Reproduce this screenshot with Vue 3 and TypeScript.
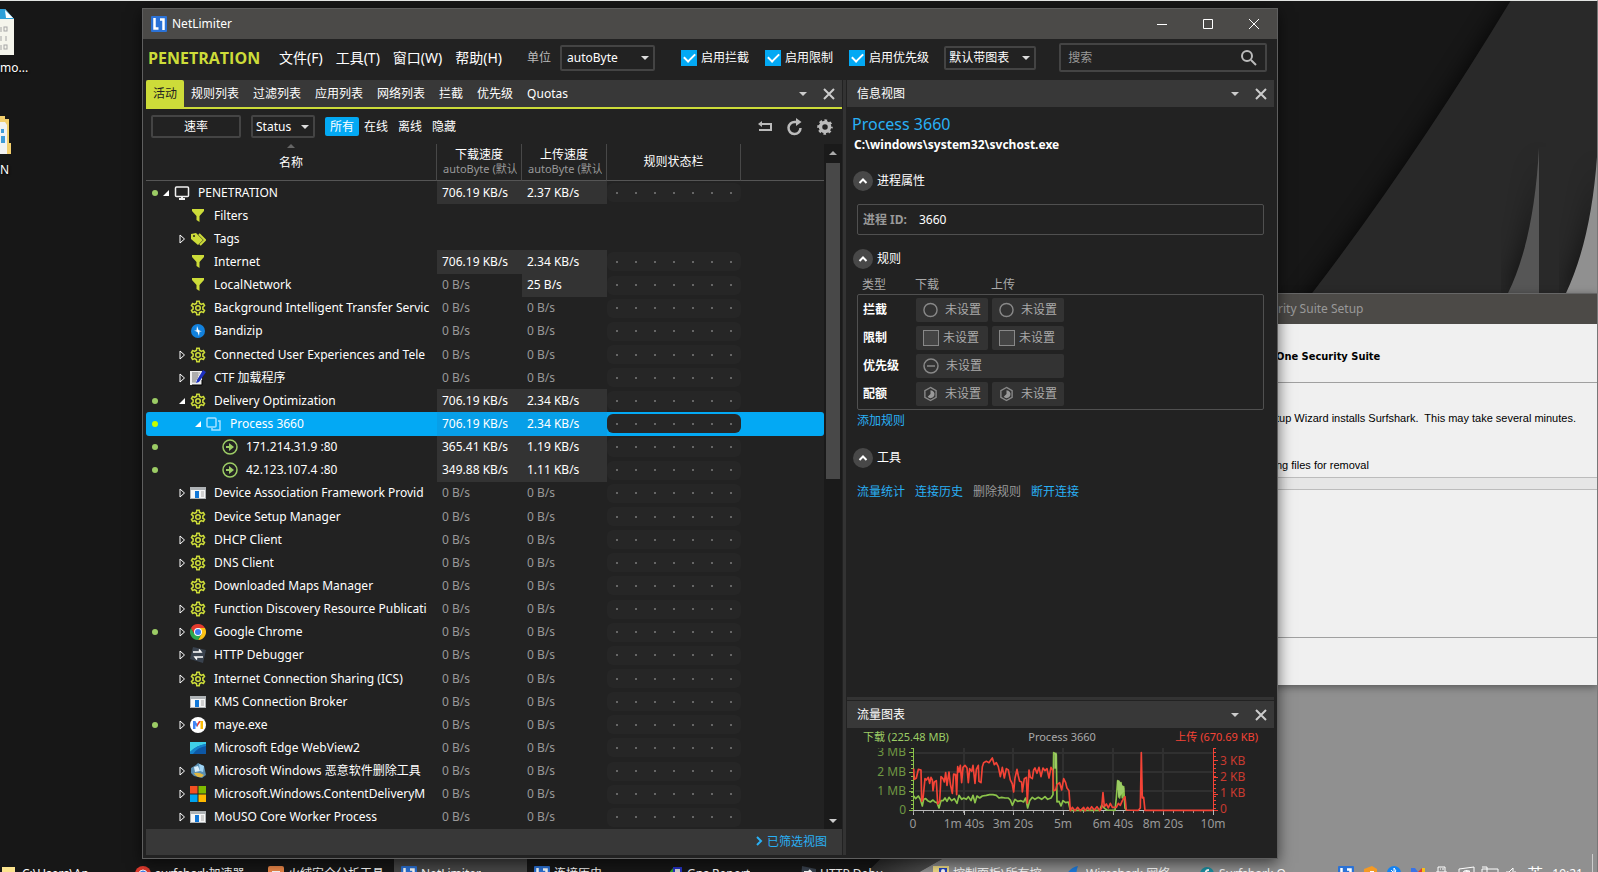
<script setup lang="ts">
import { ref } from 'vue'

interface TreeRow {
  name: string
  icon: string
  level: number
  toggle?: 'open' | 'closed'
  live?: boolean
  down?: string
  up?: string
  selected?: boolean
}

const idle = '0 B/s'

const rows: TreeRow[] = [
  { name: 'PENETRATION', icon: 'monitor', level: 0, toggle: 'open', live: true, down: '706.19 KB/s', up: '2.37 KB/s' },
  { name: 'Filters', icon: 'funnel', level: 1 },
  { name: 'Tags', icon: 'tags', level: 1, toggle: 'closed' },
  { name: 'Internet', icon: 'funnel', level: 1, down: '706.19 KB/s', up: '2.34 KB/s' },
  { name: 'LocalNetwork', icon: 'funnel', level: 1, down: idle, up: '25 B/s' },
  { name: 'Background Intelligent Transfer Servic', icon: 'gear', level: 1, down: idle, up: idle },
  { name: 'Bandizip', icon: 'bandizip', level: 1, down: idle, up: idle },
  { name: 'Connected User Experiences and Tele', icon: 'gear', level: 1, toggle: 'closed', down: idle, up: idle },
  { name: 'CTF 加载程序', icon: 'ctf', level: 1, toggle: 'closed', down: idle, up: idle },
  { name: 'Delivery Optimization', icon: 'gear', level: 1, toggle: 'open', live: true, down: '706.19 KB/s', up: '2.34 KB/s' },
  { name: 'Process 3660', icon: 'process', level: 2, toggle: 'open', live: true, down: '706.19 KB/s', up: '2.34 KB/s', selected: true },
  { name: '171.214.31.9 :80', icon: 'link', level: 3, live: true, down: '365.41 KB/s', up: '1.19 KB/s' },
  { name: '42.123.107.4 :80', icon: 'link', level: 3, live: true, down: '349.88 KB/s', up: '1.11 KB/s' },
  { name: 'Device Association Framework Provid', icon: 'app', level: 1, toggle: 'closed', down: idle, up: idle },
  { name: 'Device Setup Manager', icon: 'gear', level: 1, down: idle, up: idle },
  { name: 'DHCP Client', icon: 'gear', level: 1, toggle: 'closed', down: idle, up: idle },
  { name: 'DNS Client', icon: 'gear', level: 1, toggle: 'closed', down: idle, up: idle },
  { name: 'Downloaded Maps Manager', icon: 'gear', level: 1, down: idle, up: idle },
  { name: 'Function Discovery Resource Publicati', icon: 'gear', level: 1, toggle: 'closed', down: idle, up: idle },
  { name: 'Google Chrome', icon: 'chrome', level: 1, toggle: 'closed', live: true, down: idle, up: idle },
  { name: 'HTTP Debugger', icon: 'http', level: 1, toggle: 'closed', down: idle, up: idle },
  { name: 'Internet Connection Sharing (ICS)', icon: 'gear', level: 1, toggle: 'closed', down: idle, up: idle },
  { name: 'KMS Connection Broker', icon: 'app', level: 1, down: idle, up: idle },
  { name: 'maye.exe', icon: 'maye', level: 1, toggle: 'closed', live: true, down: idle, up: idle },
  { name: 'Microsoft Edge WebView2', icon: 'edge', level: 1, down: idle, up: idle },
  { name: 'Microsoft Windows 恶意软件删除工具', icon: 'msrt', level: 1, toggle: 'closed', down: idle, up: idle },
  { name: 'Microsoft.Windows.ContentDeliveryM', icon: 'windows', level: 1, toggle: 'closed', down: idle, up: idle },
  { name: 'MoUSO Core Worker Process', icon: 'app', level: 1, toggle: 'closed', down: idle, up: idle },
]

const menus = ['文件(F)', '工具(T)', '窗口(W)', '帮助(H)']
const tabs = ['活动', '规则列表', '过滤列表', '应用列表', '网络列表', '拦截', '优先级', 'Quotas']
const scopes = ['所有', '在线', '离线', '隐藏']
const activeTab = ref('活动')
const activeScope = ref('所有')
const switches = ref([
  { label: '启用拦截', on: true },
  { label: '启用限制', on: true },
  { label: '启用优先级', on: true },
])

const rules = [
  { label: '拦截', mark: 'circle', count: 2 },
  { label: '限制', mark: 'square', count: 2 },
  { label: '优先级', mark: 'minus', count: 1 },
  { label: '配额', mark: 'quota', count: 2 },
]

const isBusy = (rate?: string) => rate !== undefined && rate !== idle

const gearPath =
  'M12,8A4,4 0 0,1 16,12A4,4 0 0,1 12,16A4,4 0 0,1 8,12A4,4 0 0,1 12,8M12,10A2,2 0 0,0 10,12A2,2 0 0,0 12,14A2,2 0 0,0 14,12A2,2 0 0,0 12,10M10,22C9.75,22 9.54,21.82 9.5,21.58L9.13,18.93C8.5,18.68 7.96,18.34 7.44,17.94L4.95,18.95C4.73,19.03 4.46,18.95 4.34,18.73L2.34,15.27C2.21,15.05 2.27,14.78 2.46,14.63L4.57,12.97L4.5,12L4.57,11L2.46,9.37C2.27,9.22 2.21,8.95 2.34,8.73L4.34,5.27C4.46,5.05 4.73,4.96 4.95,5.05L7.44,6.05C7.96,5.66 8.5,5.32 9.13,5.07L9.5,2.42C9.54,2.18 9.75,2 10,2H14C14.25,2 14.46,2.18 14.5,2.42L14.87,5.07C15.5,5.32 16.04,5.66 16.56,6.05L19.05,5.05C19.27,4.96 19.54,5.05 19.66,5.27L21.66,8.73C21.79,8.95 21.73,9.22 21.54,9.37L19.43,11L19.5,12L19.43,13L21.54,14.63C21.73,14.78 21.79,15.05 21.66,15.27L19.66,18.73C19.54,18.95 19.27,19.04 19.05,18.95L16.56,17.95C16.04,18.34 15.5,18.68 14.87,18.93L14.5,21.58C14.46,21.82 14.25,22 14,22H10M11.25,4L10.88,6.61C9.68,6.86 8.62,7.5 7.85,8.39L5.44,7.35L4.69,8.65L6.8,10.2C6.4,11.37 6.4,12.64 6.8,13.8L4.68,15.36L5.43,16.66L7.86,15.62C8.63,16.5 9.68,17.14 10.87,17.38L11.24,20H12.76L13.13,17.39C14.32,17.14 15.37,16.5 16.14,15.62L18.57,16.66L19.32,15.36L17.2,13.81C17.6,12.64 17.6,11.37 17.2,10.2L19.31,8.65L18.56,7.35L16.15,8.39C15.38,7.5 14.32,6.86 13.12,6.62L12.75,4H11.25Z'

/* Chart series, in thirds of a pixel from the plot's top left corner. */
const uploadLine =
  '2,62 4,94 10,90 16,64 24,66 26,160 30,152 36,92 40,96 46,88 50,106 54,88 58,96 60,128 64,102 70,98 74,168 80,160 84,86 90,92 94,102 98,74 102,112 108,72 112,108 118,136 122,78 128,80 131,140 134,56 138,72 142,52 146,104 150,58 156,52 162,60 166,104 170,62 176,70 180,52 186,106 190,64 196,52 198,100 204,104 208,56 212,44 220,40 228,44 232,38 238,30 244,50 250,44 256,56 262,86 268,58 274,90 280,62 286,66 292,96 298,108 302,132 306,90 312,64 316,84 320,100 326,102 328,132 334,92 340,88 343,166 348,66 352,88 358,92 362,66 366,60 372,76 378,58 384,86 390,60 396,68 402,62 408,90 414,58 419,66 422,128 428,126 432,110 440,104 446,126 452,92 458,104 462,120 468,128 472,188 478,178 486,188 494,178 502,188 512,178 516,188 524,178 530,186 536,176 544,186 552,176 560,188 566,180 570,134 574,176 580,168 586,180 592,166 598,178 610,178 616,166 622,172 628,158 636,146 640,186 676,187 682,180 685,14 688,150 692,148 696,187 900,187'
const downloadLine =
  '2,144 8,152 16,144 22,154 28,174 32,154 38,152 44,158 52,162 60,156 66,162 72,164 78,180 84,158 90,158 96,150 102,160 108,148 116,158 124,152 132,166 138,142 146,154 152,150 160,154 166,146 174,158 180,142 186,164 192,144 200,150 208,144 220,142 230,140 240,140 250,142 258,150 266,148 276,150 286,150 292,156 298,172 306,154 314,160 324,158 332,162 338,150 344,180 350,158 358,148 366,154 376,148 386,154 396,146 404,154 414,150 420,140 422,14 430,20 432,162 438,160 444,174 450,158 458,164 466,162 472,187 560,187 566,172 576,182 582,186 606,187 610,150 614,98 620,150 624,104 628,150 632,116 636,180 640,187'

const tasks = [
  { label: 'C:\\Users\\Ap...', icon: 'folder' },
  { label: 'surfshark加速器', icon: 'chrome' },
  { label: '火绒安全分析工具', icon: 'fire' },
  { label: 'NetLimiter', icon: 'nl', active: true },
  { label: '连接历史', icon: 'nl' },
  { label: 'Gns Report', icon: 'report' },
  { label: 'HTTP Debu...', icon: 'http' },
  { label: '控制面板\\所有控...', icon: 'panel' },
  { label: 'Wireshark·网络...', icon: 'shark' },
  { label: 'Surfshark O...', icon: 'surf' },
]
</script>

<template>
  <div class="desktop">
    <svg class="wallpaper" viewBox="0 0 1598 872" preserveAspectRatio="none" aria-hidden="true">
      <defs>
        <filter id="soft" x="-20%" y="-20%" width="140%" height="140%"><feGaussianBlur stdDeviation="12" /></filter>
        <linearGradient id="fold" x1="0" x2="1"><stop offset="0" stop-color="#2a2a2a" /><stop offset="1" stop-color="#575757" /></linearGradient>
      </defs>
      <rect width="1598" height="872" fill="#171717" />
      <path d="M1512 0Q1420 150 1313 293L880 872H1598V0Z" fill="#000" filter="url(#soft)" opacity=".8" />
      <path d="M1512 0Q1415 160 1313 293L1270 350V872H1598V0Z" fill="#292929" />
      <path d="M1540 147Q1535 240 1509 293H1540Z" fill="#000" filter="url(#soft)" opacity=".7" />
      <path d="M1540 147H1598V293H1540Z" fill="#292929" />
      <path d="M1540 147Q1535 240 1509 293H1540Z" fill="#565656" />
      <path d="M1598 157Q1592 240 1567 293H1598Z" fill="#000" filter="url(#soft)" opacity=".7" />
      <path d="M1598 157Q1592 240 1567 293H1598Z" fill="#909090" />
      <path d="M883 857L868 872H920L946 857Z" fill="url(#fold)" />
      <path d="M946 857L920 872H1598V640H1200Z" fill="#909090" />
    </svg>

    <div class="shortcut file">
      <svg width="14" height="48" viewBox="0 0 14 48" aria-hidden="true">
        <path d="M0 0H5L14 10V46H0Z" fill="#f5f5ec" />
        <path d="M0 0H5L14 10H0Z" fill="#2d9fd8" /><path d="M5 1L13 9H6Z" fill="#fff" />
        <g fill="none" stroke="#a5a5a5"><path d="M1 18V23M1 27V32M1 36V41" /><rect x="4" y="18" width="3" height="4" /><path d="M6 27V32" /><rect x="4" y="36" width="3" height="4" /></g>
      </svg>
      <span>mo...</span>
    </div>
    <div class="shortcut dir">
      <svg width="14" height="40" viewBox="0 0 14 40" aria-hidden="true">
        <path d="M0 0H5V3H9V27H11V38H0Z" fill="#f3cf6d" /><path d="M0 6H5L7 9V38H0Z" fill="#f2f2f2" /><path d="M1 13H4V17H1ZM1 20H5V27H1Z" fill="#3f9bd8" />
      </svg>
      <span>N</span>
    </div>

    <section class="installer">
      <header>rity Suite Setup</header>
      <h3>One Security Suite</h3>
      <p>tup Wizard installs Surfshark.&nbsp; This may take several minutes.</p>
      <p>ng files for removal</p>
      <div class="bar"></div>
      <footer></footer>
    </section>

    <nav class="taskbar">
      <button v-for="t in tasks" :key="t.label" class="task" :class="{ on: t.active }">
        <svg width="16" height="16" viewBox="0 0 16 16" aria-hidden="true">
          <g v-if="t.icon === 'nl'"><rect width="16" height="16" rx="1" fill="#2b72d6" /><path d="M3.500 2V12.500H7.500M9 3.500H12.500V14" fill="none" stroke="#fff" stroke-width="2.500" /></g>
          <g v-else-if="t.icon === 'chrome'"><circle cx="8" cy="8" r="8" fill="#e33b2e" /><circle cx="8" cy="8" r="4" fill="#4285f4" stroke="#fff" /></g>
          <g v-else-if="t.icon === 'fire'"><rect width="16" height="16" rx="2" fill="#f08a4b" /><path d="M4 5H12V12H4Z" fill="#fff" /></g>
          <g v-else-if="t.icon === 'folder'"><path d="M0 1H13V16H0Z" fill="#fbe38e" /></g>
          <g v-else-if="t.icon === 'report'"><path d="M1 8L6 2L8 8Z" fill="#2ca02c" /><path d="M6 1H15V14H6Z" fill="#2733c7" /><path d="M8 3H13V8H8Z" fill="#ddd" /></g>
          <g v-else-if="t.icon === 'http'"><path d="M2 0L16 3V15L1 13Z" fill="#39424e" /><path d="M4 6H11L9 4M12 10H5L7 12" fill="none" stroke="#fff" stroke-width="2" /></g>
          <g v-else-if="t.icon === 'panel'"><rect width="16" height="14" fill="#f4e08a" /><rect x="6" y="2" width="8" height="9" fill="#2447c4" /><circle cx="10" cy="5" r="2" fill="#fff" /></g>
          <path v-else-if="t.icon === 'shark'" d="M0 10Q4 1 12 0Q9 7 12 14H0Z" fill="#1d7de0" />
          <g v-else><circle cx="8" cy="8" r="7" fill="#1b8fa1" /><path d="M10 4Q6 4 7 8Q9 12 5 12" fill="none" stroke="#fff" stroke-width="2" /></g>
        </svg>
        <span>{{ t.label }}</span>
      </button>
      <div class="tray">
        <svg width="180" height="16" viewBox="0 0 180 16" aria-hidden="true">
          <rect width="16" height="16" rx="1" fill="#2b72d6" /><path d="M3.500 2V12.500H7.500M9 3.500H12.500V14" fill="none" stroke="#fff" stroke-width="2.500" />
          <path d="M26 3L34 0L39 3V14H26Z" fill="#f59a23" /><path d="M32 5H36V12H32Z" fill="#fff" />
          <circle cx="56" cy="7" r="7" fill="#1583f2" /><path d="M53 4L58 9L56 11V2L58 5L53 9" fill="none" stroke="#fff" />
          <path d="M73 2H77L80 6V12H73Z" fill="#3973e6" /><path d="M80 6L84 2V12H80Z" fill="#e33b2e" /><path d="M84 2H87V12H84Z" fill="#f5c21b" />
          <g fill="none" stroke="#fff"><path d="M100 6V1H107V6M98 6H109V15H98ZM102 3H103M104 3H106" /><path d="M121 3L136 1V14H121ZM126 6L132 5M124 10A4 4 0 0 1 133 8" /><path d="M144 3H160V12H144ZM144 1H149V6" /><path d="M168 6H171L175 2V14L171 10H168M177 5V11" /></g>
        </svg>
        <span class="ime">英</span>
        <time>19:21</time>
      </div>
    </nav>

    <main class="window">
      <header class="titlebar">
        <svg width="16" height="16" viewBox="0 0 16 16" aria-hidden="true"><rect width="16" height="16" rx="1" fill="#2b72d6" /><path d="M3.500 2V12.500H7.500M9 3.500H12.500V14" fill="none" stroke="#fff" stroke-width="2.500" /></svg>
        <span class="caption">NetLimiter</span>
        <button aria-label="Minimize"><svg width="12" height="12" viewBox="0 0 12 12"><path d="M1 6.500H11" /></svg></button>
        <button aria-label="Maximize"><svg width="12" height="12" viewBox="0 0 12 12"><path d="M1.500 1.500H10.500V10.500H1.500Z" /></svg></button>
        <button aria-label="Close"><svg width="12" height="12" viewBox="0 0 12 12"><path d="M1 1L11 11M11 1L1 11" /></svg></button>
      </header>

      <div class="menubar">
        <strong class="host">PENETRATION</strong>
        <button v-for="m in menus" :key="m" class="menu">{{ m }}</button>
        <label class="unit" for="unit">单位</label>
        <span class="select wide"><select id="unit"><option>autoByte</option></select></span>
        <label v-for="s in switches" :key="s.label" class="switch"><input v-model="s.on" type="checkbox" />{{ s.label }}</label>
        <span class="select chart-mode"><select aria-label="图表模式"><option>默认带图表</option></select></span>
        <div class="search">
          <input type="text" placeholder="搜索" aria-label="搜索" />
          <svg width="18" height="18" viewBox="0 0 18 18" aria-hidden="true"><circle cx="7" cy="7" r="5" /><path d="M11 11L16 16" /></svg>
        </div>
      </div>

      <div class="body">
        <section class="left">
          <div class="tabs">
            <button v-for="t in tabs" :key="t" :class="{ on: activeTab === t }" @click="activeTab = t">{{ t }}</button>
            <span class="grow"></span>
            <button class="glyph" aria-label="展开"><i class="caret"></i></button>
            <button class="glyph" aria-label="关闭"><svg width="12" height="12" viewBox="0 0 12 12"><path d="M1 1L11 11M11 1L1 11" /></svg></button>
          </div>
          <div class="tools">
            <button class="rate">速率</button>
            <span class="select status"><select aria-label="Status"><option>Status</option></select></span>
            <div class="scopes"><button v-for="s in scopes" :key="s" :class="{ on: activeScope === s }" @click="activeScope = s">{{ s }}</button></div>
            <span class="grow"></span>
            <button class="tool" aria-label="返回"><svg width="18" height="18" viewBox="0 0 18 18"><path d="M4 6H15V12H3" fill="none" stroke="#bbb" stroke-width="2" /><path d="M2 6L6 3V9Z" fill="#bbb" /></svg></button>
            <button class="tool" aria-label="刷新"><svg width="18" height="18" viewBox="0 0 18 18"><path d="M14.500 10A6 6 0 1 1 9 4H11" fill="none" stroke="#bbb" stroke-width="2.500" /><path d="M10 0L15.500 4L10 8Z" fill="#bbb" /></svg></button>
            <button class="tool" aria-label="设置"><svg width="18" height="18" viewBox="0 0 18 18"><g fill="none" stroke="#bbb"><circle cx="9" cy="9" r="4.500" stroke-width="3.500" /><circle cx="9" cy="9" r="6.500" stroke-width="2.500" stroke-dasharray="2.600 2.505" stroke-dashoffset="1.300" /></g></svg></button>
          </div>

          <div class="tree">
            <table>
              <colgroup><col class="c-name" /><col class="c-rate" /><col class="c-rate" /><col class="c-rule" /><col /></colgroup>
              <thead>
                <tr>
                  <th><i class="sort"></i>名称</th>
                  <th><b>下载速度</b><small>autoByte (默认)</small></th>
                  <th><b>上传速度</b><small>autoByte (默认)</small></th>
                  <th>规则状态栏</th>
                  <th></th>
                </tr>
              </thead>
              <tbody>
                <tr v-for="r in rows" :key="r.name" :class="{ selected: r.selected }">
                  <td class="name">
                    <div :class="['cell', 'level' + r.level]">
                      <i class="live" :class="{ on: r.live }"></i>
                      <span class="toggle">
                        <svg v-if="r.toggle === 'open'" width="8" height="8" viewBox="0 0 8 8"><path d="M7 1V7H1Z" fill="#fff" /></svg>
                        <svg v-else-if="r.toggle === 'closed'" width="8" height="10" viewBox="0 0 8 10"><path d="M2 1L6.500 5L2 9Z" fill="none" stroke="#fff" /></svg>
                      </span>
                      <svg class="icon" width="16" height="16" viewBox="0 0 16 16" aria-hidden="true">
                        <g v-if="r.icon === 'monitor'" fill="none" stroke="#f1f1f1"><rect x="1.500" y="2" width="13" height="9.500" rx="1" stroke-width="1.500" /><path d="M5 14H11M8 11V14" stroke-width="2" /></g>
                        <path v-else-if="r.icon === 'funnel'" d="M2 1H14V3L9.500 8V14L6.500 12V8L2 3Z" fill="#cddc39" />
                        <g v-else-if="r.icon === 'tags'"><path d="M9 3L15 9L10 14" fill="none" stroke="#cddc39" stroke-width="2" /><path d="M1 3L6 2L13 9L8 14L1 8Z" fill="#cddc39" /><circle cx="4" cy="5" r="1" fill="#222" /></g>
                        <svg v-else-if="r.icon === 'gear'" width="16" height="16" viewBox="1.500 1.500 21 21"><path :d="gearPath" fill="#cddc39" /></svg>
                        <g v-else-if="r.icon === 'bandizip'"><circle cx="8" cy="8" r="7" fill="#1281dd" /><path d="M7 3L8.500 7L12 8.500H9.500L9 13L7.500 9L4 7.500H6.500Z" fill="#fff" /></g>
                        <g v-else-if="r.icon === 'ctf'"><path d="M0 1H12V15H0Z" fill="#eee" /><path d="M2 3H10M2 5H9M2 7H8M2 9H7M2 11H6M3 2V13M5 2V13M7 2V10" stroke="#888" stroke-width=".8" /><path d="M13 0L7 10L6 13L9 12L16 2Z" fill="#1b2fc0" /><path d="M2 15H12V10" stroke="#000" fill="none" /></g>
                        <g v-else-if="r.icon === 'process'" fill="none" stroke="#a5e1ff" stroke-width="1.500"><rect x="1" y="2" width="9" height="9" rx="1" /><path d="M12 5H14V14H6V12" /></g>
                        <g v-else-if="r.icon === 'link'"><circle cx="8" cy="8" r="7" fill="none" stroke="#9ccc65" stroke-width="1.500" /><path d="M4 7H7V4L12 8L7 12V9H4Z" fill="#9ccc65" /></g>
                        <g v-else-if="r.icon === 'app'"><path d="M0 2H16V14H0Z" fill="#aeb2b5" /><path d="M1 5H15V13H1Z" fill="#f6f6f6" /><path d="M5 6H9V13H5Z" fill="#1177d7" /><path d="M11 7H14M11 9H14M11 11H14" stroke="#aaa" /></g>
                        <g v-else-if="r.icon === 'chrome'"><path d="M8 4H14.930A8 8 0 0 1 8 16L11.500 10Z" fill="#fbc116" /><path d="M1.070 4A8 8 0 0 0 8 16L11.500 10H4.500Z" fill="#2da94f" /><path d="M1.070 4A8 8 0 0 1 14.930 4H8L4.500 10Z" fill="#e33b2e" /><circle cx="8" cy="8" r="4" fill="#fff" /><circle cx="8" cy="8" r="3" fill="#3c7df0" /></g>
                        <g v-else-if="r.icon === 'http'"><path d="M3 0L16 3L13 16L0 12Z" fill="#39424e" /><path d="M3 5H11L9 2.500M13 10H5L7 12.500" fill="none" stroke="#fff" stroke-width="1.500" /></g>
                        <g v-else-if="r.icon === 'maye'"><circle cx="8" cy="8" r="8" fill="#fff" /><path d="M3 4H5.500V12H3Z" fill="#4285f4" /><path d="M5 4L8 8L7 10L5 8Z" fill="#4285f4" /><path d="M11 4L7 10V7L9 4Z" fill="#ea4335" /><path d="M10.500 4H13V12H10.500Z" fill="#fbbc05" /></g>
                        <g v-else-if="r.icon === 'edge'"><path d="M0 2H16V14H0Z" fill="#0d57a5" /><path d="M0 2H16V4Q7 5 0 12Z" fill="#3fd0e8" /><path d="M0 12Q7 5 16 4V6Q8 7 3 14H0Z" fill="#1583cb" /></g>
                        <g v-else-if="r.icon === 'msrt'"><path d="M1 5L6 2L8 0L14 3L16 12L12 15L4 13L1 10Z" fill="#5a8fb3" /><path d="M4 4L8 3L10 8L5 9Z" fill="#d9eefb" /><path d="M9 1L14 3L13 9L10 8Z" fill="#9fd4f5" /><path d="M4 10Q9 9 14 12L12 14Q6 15 4 10Z" fill="#e0b742" /></g>
                        <g v-else-if="r.icon === 'windows'"><path d="M0 0H7.500V7.500H0Z" fill="#f25022" /><path d="M8.500 0H16V7.500H8.500Z" fill="#7fba00" /><path d="M0 8.500H7.500V16H0Z" fill="#00a4ef" /><path d="M8.500 8.500H16V16H8.500Z" fill="#ffb900" /></g>
                      </svg>
                      <span class="label">{{ r.name }}</span>
                    </div>
                  </td>
                  <td class="rate-cell" :class="{ busy: isBusy(r.down) }">{{ r.down }}</td>
                  <td class="rate-cell" :class="{ busy: isBusy(r.up) }">{{ r.up }}</td>
                  <td class="rule-cell"><div v-if="r.down" class="pill"><i v-for="n in 7" :key="n"></i></div></td>
                  <td class="rest"></td>
                </tr>
              </tbody>
            </table>
            <div class="scroll"><i class="up"></i><span class="thumb"></span><i class="down"></i></div>
          </div>
          <footer class="filtered"><a href="#"><svg width="8" height="10" viewBox="0 0 8 10" aria-hidden="true"><path d="M2 1L6 5L2 9" /></svg>已筛选视图</a></footer>
        </section>

        <aside class="right">
          <section class="info">
            <header class="pane-head"><span>信息视图</span>
              <button class="glyph" aria-label="展开"><i class="caret"></i></button>
              <button class="glyph" aria-label="关闭"><svg width="12" height="12" viewBox="0 0 12 12"><path d="M1 1L11 11M11 1L1 11" /></svg></button>
            </header>
            <h1>Process 3660</h1>
            <p class="path">C:\windows\system32\svchost.exe</p>

            <h2 class="first"><button aria-label="折叠"><svg width="10" height="8" viewBox="0 0 10 8"><path d="M1.500 6L5 2.500L8.500 6" /></svg></button>进程属性</h2>
            <dl><dt>进程 ID:</dt><dd>3660</dd></dl>

            <h2 class="second"><button aria-label="折叠"><svg width="10" height="8" viewBox="0 0 10 8"><path d="M1.500 6L5 2.500L8.500 6" /></svg></button>规则</h2>
            <div class="rule-grid rule-titles"><span>类型</span><span>下载</span><span>上传</span></div>
            <div class="rules">
              <div v-for="r in rules" :key="r.label" class="rule-grid">
                <b>{{ r.label }}</b>
                <button v-for="n in r.count" :key="n" :class="[r.mark, { span: r.count === 1 }]">
                  <svg width="16" height="16" viewBox="0 0 16 16" aria-hidden="true">
                    <rect v-if="r.mark === 'square'" x=".5" y=".5" width="15" height="15" fill="#444" />
                    <g v-else-if="r.mark === 'quota'"><path d="M8 1L14 4.500V11.500L8 15L2 11.500V4.500Z" stroke-width="1.500" /><path d="M8 4V8L5 11A4.200 4.200 0 1 0 8 4Z" fill="#999" stroke="none" /></g>
                    <g v-else stroke-width="1.500"><circle cx="8" cy="8" r="7" /><path v-if="r.mark === 'minus'" d="M4 8H12" /></g>
                  </svg>未设置
                </button>
              </div>
            </div>
            <a class="add" href="#">添加规则</a>

            <h2 class="third"><button aria-label="折叠"><svg width="10" height="8" viewBox="0 0 10 8"><path d="M1.500 6L5 2.500L8.500 6" /></svg></button>工具</h2>
            <div class="links"><a href="#">流量统计</a><a href="#">连接历史</a><a class="off" href="#">删除规则</a><a href="#">断开连接</a></div>
          </section>

          <section class="traffic">
            <header class="pane-head"><span>流量图表</span>
              <button class="glyph" aria-label="展开"><i class="caret"></i></button>
              <button class="glyph" aria-label="关闭"><svg width="12" height="12" viewBox="0 0 12 12"><path d="M1 1L11 11M11 1L1 11" /></svg></button>
            </header>
            <div class="legend"><span class="dl">下载 (225.48 MB)</span><span>Process 3660</span><span class="ul">上传 (670.69 KB)</span></div>
            <svg class="plot" height="90" viewBox="0 0 427 90" role="img" aria-label="流量图表">
              <path d="M117 0V62M166 0V62M216 0V62M266 0V62M316 0V62M68 5H366M68 24H366M68 43H366" stroke="#303030" stroke-width="2" />
              <path d="M66.500 0V66M62 4.500H66M62 24.500H66M62 43.500H66M62 62.500H66" stroke="#8bc34a" />
              <path d="M65 0V62" stroke="#8bc34a" stroke-width="2" stroke-dasharray="1 3" />
              <path d="M366.500 0V62M366 12.500H371M366 29.500H371M366 46.500H371M366 62.500H371" stroke="#f44336" />
              <path d="M368 0V62" stroke="#f44336" stroke-width="2" stroke-dasharray="1 3" />
              <path d="M66 62.500H366M66.500 62V67M117.500 62V67M166.500 62V67M216.500 62V67M266.500 62V67M316.500 62V67M366.500 62V67" stroke="#bbb" />
              <path d="M66 64H366" stroke="#999" stroke-width="2" stroke-dasharray="1 9" />
              <g transform="translate(66 0) scale(.3333)" fill="none" stroke-width="5" stroke-linejoin="round">
                <polyline :points="downloadLine" stroke="#8bc34a" />
                <path d="M424 14H431V62H424Z" fill="#9ccc65" />
                <path d="M612 100L618 96L634 120V130L616 150Z" fill="#9ccc65" />
                <polyline :points="uploadLine" stroke="#f44336" />
              </g>
              <g class="dl-axis" text-anchor="end"><text x="59" y="8">3 MB</text><text x="59" y="28">2 MB</text><text x="59" y="47">1 MB</text><text x="59" y="66">0</text></g>
              <g class="ul-axis"><text x="373" y="17">3 KB</text><text x="373" y="33">2 KB</text><text x="373" y="49">1 KB</text><text x="373" y="65">0</text></g>
              <g class="time-axis" text-anchor="middle"><text x="66" y="80">0</text><text x="117" y="80">1m 40s</text><text x="166" y="80">3m 20s</text><text x="216" y="80">5m</text><text x="266" y="80">6m 40s</text><text x="316" y="80">8m 20s</text><text x="366" y="80">10m</text></g>
            </svg>
          </section>
        </aside>
      </div>
    </main>
  </div>
</template>

<style>
body { margin: 0; background: #171717; }
</style>

<style scoped>
* { box-sizing: border-box; }
.desktop { position: relative; height: 100vh; overflow: hidden; border-top: 1px solid #e2e4e2; border-right: 1px solid #777; color: #fff; font: 12px/16px "Noto Sans", "Noto Sans CJK SC", sans-serif; }
button, input, select { font: inherit; color: inherit; margin: 0; padding: 0; border: 0; background: none; }
button { display: flex; align-items: center; justify-content: center; white-space: nowrap; }
a { color: #29b0f5; text-decoration: none; }
h1, h2, h3, p, dl, dd { margin: 0; }
.grow { flex: 1; }
.wallpaper { position: absolute; top: -1px; left: 0; width: 100%; height: 100vh; }

.shortcut { position: absolute; left: 0; display: flex; flex-direction: column; gap: 3px; text-shadow: 1px 1px 2px #000; }
.shortcut svg { display: block; }
.file { top: 8px; }
.dir { top: 115px; gap: 6px; }

.installer { position: absolute; top: 292px; left: 1270px; right: 0; height: 392px; display: flex; flex-direction: column; background: #f0f0f0; color: #000; font-size: 11px; white-space: nowrap; overflow: hidden; box-shadow: 0 2px 8px #0006; border-top: 1px solid #666; }
.installer header { height: 30px; padding: 7px 8px; background: #4c4a47; color: #999; font-size: 12px; }
.installer h3 { height: 59px; padding: 25px 6px 0; font: 700 11px/16px "DejaVu Sans Condensed", "DejaVu Sans", sans-serif; border-bottom: 1px solid #a0a0a0; }
.installer p { padding: 27px 6px 0; height: 47px; font-family: "Liberation Sans", sans-serif; }
.installer .bar { height: 13px; border: solid #bcbcbc; border-width: 1px 0; background: #e6e6e6; }
.installer footer { margin-top: auto; height: 48px; border-top: 1px solid #a0a0a0; }

.taskbar { position: absolute; left: -5px; right: 0; bottom: -22px; height: 40px; display: flex; }
.task { width: 133px; flex: none; justify-content: flex-start; gap: 4px; padding: 0 7px; }
.task svg { flex: none; }
.task span { overflow: hidden; }
.task.on { background: #484848; }
.tray { margin-left: auto; display: flex; align-items: center; gap: 9px; padding-right: 9px; border-right: 1px solid #ccc; margin-right: 4px; }
.ime { font-size: 16px; }

.window { position: absolute; left: 142px; right: 319px; top: 7px; bottom: 13px; display: flex; flex-direction: column; background: #222; border: 1px solid #5f5f5f; box-shadow: 0 4px 14px #0009; }
.titlebar { height: 30px; flex: none; display: flex; align-items: center; padding-left: 8px; background: #4b4a48; }
.caption { flex: 1; padding-left: 5px; }
.titlebar button { width: 46px; height: 30px; }
.titlebar button svg { fill: none; stroke: #fff; }

.menubar { height: 41px; flex: none; display: flex; align-items: center; padding: 0 10px 4px 5px; }
.host { width: 124px; margin-right: 7px; color: #cddc39; font: 700 16px/24px "Open Sans", sans-serif; }
.menu { font-size: 14px; margin-right: 13px; }
.unit { color: #bbb; margin: 0 9px 0 12px; }
.select { position: relative; display: flex; flex: none; }
.select select { width: 100%; appearance: none; border: 2px solid #444; border-radius: 2px; background: #222; }
.select::after { content: ""; position: absolute; right: 6px; top: 50%; margin-top: -2px; border: 4px solid transparent; border-top-color: #ddd; border-bottom: 0; pointer-events: none; }
.wide { width: 95px; margin-right: 26px; }
.wide select { height: 26px; padding-left: 5px; }
.chart-mode { width: 92px; margin-left: -1px; }
.chart-mode select { height: 24px; padding-left: 3px; }
.switch { display: flex; align-items: center; gap: 4px; margin-right: 16px; white-space: nowrap; }
.switch input { appearance: none; width: 16px; height: 16px; background: #03a9f4; display: grid; place-items: center; }
.switch input:checked::after { content: ""; width: 5px; height: 9px; margin-top: -2px; border: solid #fff; border-width: 0 2px 2px 0; transform: rotate(45deg); }
.search { flex: 1; display: flex; align-items: center; min-width: 0; height: 29px; margin-left: 23px; padding: 0 7px; border: 2px solid #444; border-radius: 2px; }
.search input { flex: 1; min-width: 0; outline: 0; }
.search input::placeholder { color: #999; }
.search svg { fill: none; stroke: #bbb; stroke-width: 2; }

.body { flex: 1; min-height: 0; display: grid; grid-template-columns: minmax(0, 696fr) 5px minmax(0, 427fr); padding: 0 3px 3px; }
.left { display: flex; flex-direction: column; min-height: 0; }
.tabs { display: flex; height: 29px; flex: none; background: #383838; border-bottom: 2px solid #cddc39; }
.tabs button { padding: 0 7px; }
.tabs button.on { background: #cddc39; color: #222; border-radius: 2px 2px 0 0; }
.tabs .glyph, .glyph { width: 26px; height: 27px; padding: 0; }
.glyph svg { fill: none; stroke: #ccc; stroke-width: 2; }
.caret { border: 4px solid transparent; border-top-color: #ccc; border-bottom: 0; }
.tools { display: flex; align-items: center; height: 35px; flex: none; padding: 0 8px 0 5px; }
.rate { width: 90px; height: 23px; border: 2px solid #444; border-radius: 2px; }
.status { width: 64px; margin: 0 10px; }
.status select { height: 23px; padding-left: 3px; }
.scopes { display: flex; }
.scopes button { height: 19px; padding: 0 5px; border-radius: 2px; }
.scopes button.on { background: #03a9f4; }
.tool { width: 18px; margin-left: 12px; }

.tree { flex: 1; min-height: 0; display: grid; grid-template-columns: minmax(0, 1fr) 18px; }
table { width: 100%; height: 100%; table-layout: fixed; border-collapse: separate; border-spacing: 0; }
.c-name { width: 291px; }
.c-rate { width: 85px; }
.c-rule { width: 134px; }
th { height: 37px; padding: 0; font-weight: 400; border-right: 1px solid #484848; border-bottom: 1px solid #555; line-height: 14px; overflow: hidden; white-space: nowrap; }
th:last-child { border-right: 0; }
th b { display: block; font-weight: 400; }
th small { display: block; margin: 0 4px 0 6px; font-size: 11px; color: #999; overflow: hidden; text-align: left; }
.sort { display: block; width: 0; margin: -10px auto 8px; border: 4px solid transparent; border-bottom-color: #666; border-top: 0; }
td { padding: 0; line-height: 20px; vertical-align: middle; white-space: nowrap; }
.cell { display: flex; align-items: center; margin-right: 5px; overflow: hidden; }
.live { flex: none; width: 6px; height: 6px; margin: 0 2px 0 6px; border-radius: 50%; }
.live.on { background: #9ccc65; }
.toggle { flex: none; width: 12px; height: 16px; margin-right: 2px; display: flex; align-items: center; justify-content: center; }
.level1 .toggle { margin-left: 16px; }
.level2 .toggle { margin-left: 32px; }
.level3 .toggle { margin-left: 48px; }
.icon { flex: none; margin-right: 8px; }
.rate-cell { padding-left: 5px; color: #999; }
.rate-cell.busy { background: #333; color: #fff; }
.pill { display: flex; align-items: center; justify-content: space-between; height: 19px; padding: 0 9px; border-radius: 6px; background: #262626; }
.pill i { width: 2px; height: 2px; background: #666; }
.selected td { background: #03a9f4; color: #fff; }
.selected .name { border-radius: 3px 0 0 3px; }
.selected .rate-cell.busy { background: #079fe8; color: #fff; }
.selected .rest { border-radius: 0 3px 3px 0; }
.selected .live { background: #c6ff00; }
.scroll { display: flex; flex-direction: column; align-items: center; padding: 7px 0 6px; background: #1a1a1a; }
.scroll .up { border: 4px solid transparent; border-bottom-color: #aaa; border-top: 0; }
.scroll .down { margin-top: auto; border: 4px solid transparent; border-top-color: #ccc; border-bottom: 0; }
.thumb { width: 14px; height: 47%; margin-top: 8px; background: #484848; }
.filtered { height: 26px; flex: none; display: flex; align-items: center; justify-content: flex-end; padding-right: 15px; background: #383838; }
.filtered svg { margin-right: 4px; fill: none; stroke: #29b0f5; stroke-width: 2; }

.right { grid-column: 3; display: flex; flex-direction: column; min-height: 0; }
.body::before { content: ""; grid-column: 2; grid-row: 1; width: 3px; margin-left: 1px; background: #333; }
.left { grid-column: 1; grid-row: 1; }
.right { grid-row: 1; }
.pane-head { display: flex; align-items: center; height: 27px; padding-left: 10px; background: #383838; }
.pane-head span { flex: 1; }
.info { flex: 1; min-height: 0; }
h1 { margin: 7px 5px 0; color: #29b0f5; font-size: 16px; line-height: 20px; font-weight: 400; }
.path { margin: 2px 7px 0; font-weight: 700; line-height: 18px; }
h2 { display: flex; align-items: center; gap: 4px; height: 20px; margin-left: 6px; font-size: 12px; font-weight: 400; }
h2 button { width: 20px; height: 20px; border-radius: 50%; background: #484848; }
h2 svg { fill: none; stroke: #fff; stroke-width: 2; }
.first { margin-top: 17px; }
dl { display: flex; align-items: center; gap: 12px; height: 31px; margin: 13px 10px 0; padding: 0 5px; border: 1px solid #505050; border-radius: 2px; }
dt { color: #999; font-weight: 700; }
.second { margin-top: 14px; }
.rule-grid { display: grid; grid-template-columns: 49px 72px 72px; gap: 4px; align-items: center; }
.rule-titles { margin: 7px 0 0 15px; color: #aaa; line-height: 18px; }
.rules { display: grid; gap: 4px; margin: 0 10px; padding: 3px 5px; border: 1px solid #505050; border-radius: 2px; }
.rules button { height: 24px; padding: 0 7px; gap: 7px; justify-content: flex-start; background: #333; color: #aaa; border-radius: 2px; }
.rules button.square { gap: 4px; }
.rules button.span { grid-column: span 2; }
.rules svg { fill: none; stroke: #888; }
.add { display: block; margin: 3px 10px 0; }
.third { margin-top: 19px; }
.links { display: flex; gap: 10px; margin: 16px 10px 0; }
.links .off { color: #999; }
.traffic { flex: none; height: 158px; border-top: 3px solid #333; }
.traffic .pane-head { margin-top: 1px; }
.legend { display: flex; justify-content: space-between; padding: 1px 16px 0; color: #aaa; font-size: 11px; line-height: 16px; }
.legend .dl { color: #9ccc65; }
.legend .ul { color: #f44336; }
.plot { display: block; width: 100%; margin-top: 3px; }
.plot text { font-size: 12px; }
.dl-axis { fill: #6f9742; }
.ul-axis { fill: #c83a30; }
.time-axis { fill: #999; }
</style>
